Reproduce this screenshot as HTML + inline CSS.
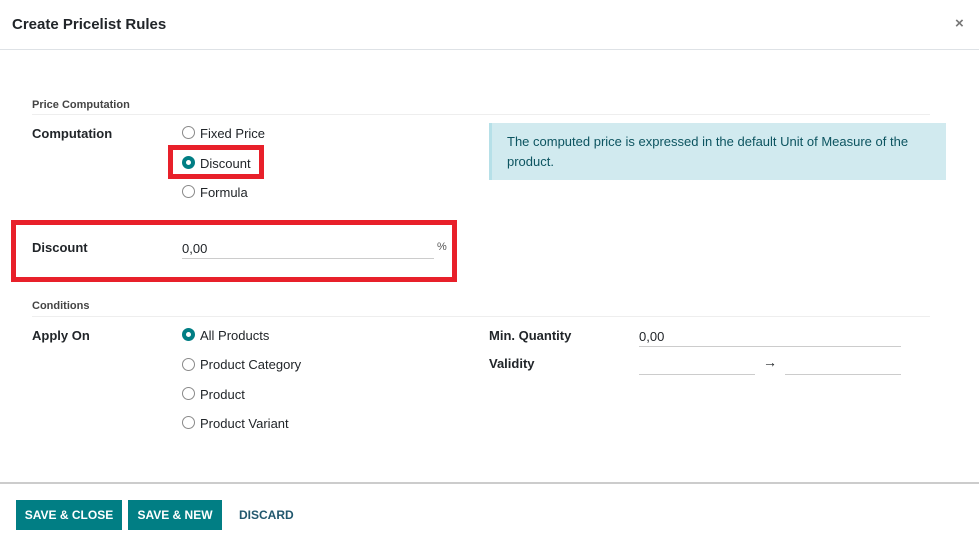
<!DOCTYPE html>
<html><head><meta charset="utf-8"><style>
*{box-sizing:border-box;margin:0;padding:0}
body{width:979px;height:546px;background:#fff;font-family:"Liberation Sans",sans-serif;color:#212529;position:relative;overflow:hidden;font-size:13px}
.a{position:absolute;white-space:nowrap}
.b{font-weight:bold}
.r{position:absolute;width:13px;height:13px;border:1px solid #8a8a8a;border-radius:50%}
.rc{border:4px solid #017e84;background:#fff}
.ln{position:absolute;height:1px;background:#ccc}
.red{position:absolute;border:5px solid #e8202a}
.btn{position:absolute;background:#017e84;color:#fff;font-weight:bold;font-size:12px;height:30px;line-height:30px;text-align:center}
</style></head><body>
<div class="a" style="left:12px;top:16px;font-size:15px;font-weight:bold">Create Pricelist Rules</div>
<div class="a" style="left:955px;top:15px;font-size:15px;color:#777;font-weight:bold">×</div>
<div class="ln" style="left:0;top:49px;width:979px;background:#dee2e6"></div>

<div class="a b" style="left:32px;top:99px;font-size:11px;color:#444">Price Computation</div>
<div class="ln" style="left:32px;top:114px;width:898px;background:#eee"></div>
<div class="a b" style="left:32px;top:126px">Computation</div>
<div class="r" style="left:182px;top:126px"></div><div class="a" style="left:200px;top:126px">Fixed Price</div>
<div class="r rc" style="left:182px;top:156px"></div><div class="a" style="left:200px;top:156px">Discount</div>
<div class="r" style="left:182px;top:185px"></div><div class="a" style="left:200px;top:185px">Formula</div>
<div class="red" style="left:168px;top:145px;width:96px;height:34px"></div>

<div class="a" style="left:489px;top:123px;width:457px;height:57px;background:#d1eaef;border-left:3px solid #b6e0e8"></div>
<div class="a" style="left:507px;top:132px;color:#0c5460;line-height:20px;white-space:normal;width:420px">The computed price is expressed in the default Unit of Measure of the product.</div>

<div class="a b" style="left:32px;top:240px">Discount</div>
<div class="a" style="left:182px;top:241px">0,00</div>
<div class="ln" style="left:182px;top:258px;width:252px"></div>
<div class="a" style="left:437px;top:241px;font-size:11px;color:#555">%</div>
<div class="red" style="left:11px;top:220px;width:446px;height:62px"></div>

<div class="a b" style="left:32px;top:300px;font-size:11px;color:#444">Conditions</div>
<div class="ln" style="left:32px;top:316px;width:898px;background:#eee"></div>
<div class="a b" style="left:32px;top:328px">Apply On</div>
<div class="r rc" style="left:182px;top:328px"></div><div class="a" style="left:200px;top:328px">All Products</div>
<div class="r" style="left:182px;top:358px"></div><div class="a" style="left:200px;top:357px">Product Category</div>
<div class="r" style="left:182px;top:387px"></div><div class="a" style="left:200px;top:387px">Product</div>
<div class="r" style="left:182px;top:416px"></div><div class="a" style="left:200px;top:416px">Product Variant</div>

<div class="a b" style="left:489px;top:328px">Min. Quantity</div>
<div class="a" style="left:639px;top:329px">0,00</div>
<div class="ln" style="left:639px;top:346px;width:262px"></div>
<div class="a b" style="left:489px;top:356px">Validity</div>
<div class="ln" style="left:639px;top:374px;width:116px"></div>
<div class="a" style="left:763px;top:354px;font-size:14px">→</div>
<div class="ln" style="left:785px;top:374px;width:116px"></div>

<div class="ln" style="left:0;top:482px;width:979px;height:2px;background:#ccc"></div>
<div class="btn" style="left:16px;top:500px;width:106px">SAVE &amp; CLOSE</div>
<div class="btn" style="left:128px;top:500px;width:94px">SAVE &amp; NEW</div>
<div class="a b" style="left:239px;top:508px;color:#22586e;font-size:12px">DISCARD</div>
</body></html>
